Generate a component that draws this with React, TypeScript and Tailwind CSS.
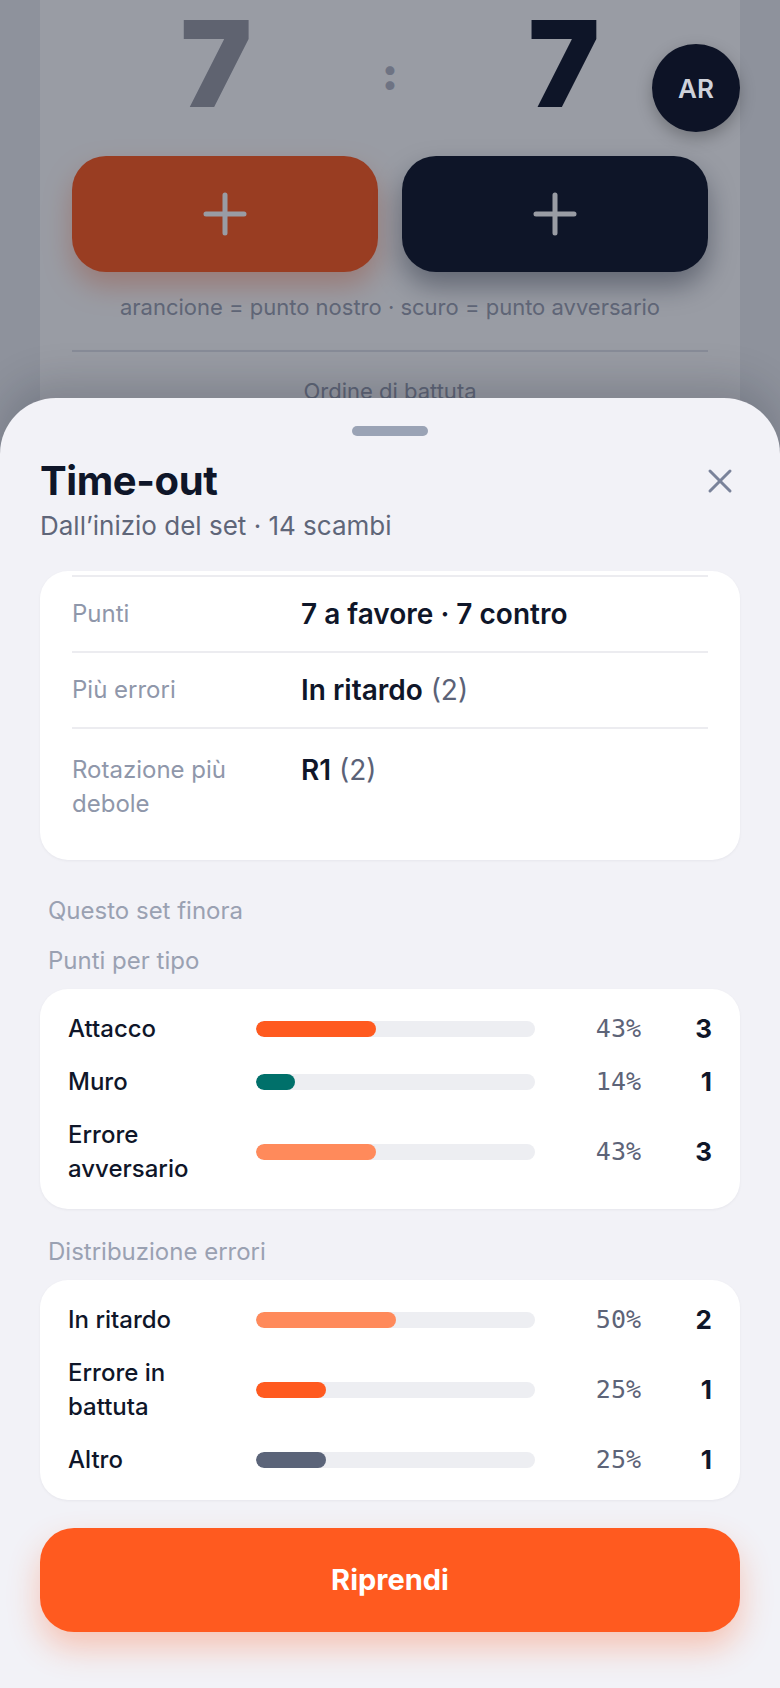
import React from 'react';
import { X } from 'lucide-react';

const summary = [
  { label: 'Punti', value: '7 a favore · 7 contro', extra: '' },
  { label: 'Più errori', value: 'In ritardo', extra: '(2)' },
  { label: 'Rotazione più debole', value: 'R1', extra: '(2)' },
];

const pointTypes = [
  { label: 'Attacco', pct: 43, count: 3, color: 'bg-[#ff5a1f]' },
  { label: 'Muro', pct: 14, count: 1, color: 'bg-[#00706a]' },
  { label: 'Errore avversario', pct: 43, count: 3, color: 'bg-[#ff8a5b]' },
];

const errorTypes = [
  { label: 'In ritardo', pct: 50, count: 2, color: 'bg-[#ff8a5b]' },
  { label: 'Errore in battuta', pct: 25, count: 1, color: 'bg-[#ff5a1f]' },
  { label: 'Altro', pct: 25, count: 1, color: 'bg-[#5b6479]' },
];

function PlusGlyph() {
  return (
    <svg width="44" height="44" viewBox="0 0 44 44" fill="none">
      <path d="M22 3v38M3 22h38" stroke="currentColor" strokeWidth="5" strokeLinecap="round" />
    </svg>
  );
}

function BarCard({ rows }: { rows: typeof pointTypes }) {
  return (
    <div className="rounded-[28px] bg-white px-7 pt-[23px] pb-[23px] flex flex-col gap-[19px] shadow-[0_1px_3px_rgba(15,22,41,0.05)]">
      {rows.map((r) => (
        <div key={r.label} className="grid grid-cols-[168px_1fr_86px_51px] gap-x-5 items-center">
          <span className="text-[24px] leading-[34px] font-medium text-[#0f1629]">{r.label}</span>
          <div className="h-4 rounded-full bg-[#edeef2] overflow-hidden">
            <div className={`h-full rounded-full ${r.color}`} style={{ width: `${r.pct}%` }} />
          </div>
          <span className="text-right text-[25px] leading-[34px] text-[#5d6478] font-['DejaVu_Sans_Mono',monospace]">
            {r.pct}%
          </span>
          <span className="text-right text-[26px] leading-[34px] font-bold text-[#0f1629]">{r.count}</span>
        </div>
      ))}
    </div>
  );
}

export default function App() {
  return (
    <div className="relative w-full h-[1688px] overflow-hidden bg-[#eceef1] font-['Inter',sans-serif]">
      {/* scoreboard behind the sheet */}
      <div className="mx-10 h-full bg-white px-8 pt-1 flex flex-col">
        <div className="flex justify-center items-center gap-[130px]">
          <span className="text-[120px] leading-none font-black text-[#9a9ca6]">7</span>
          <span className="text-[44px] leading-none font-black text-[#b4b8c6] mt-[20px]">:</span>
          <span className="text-[120px] leading-none font-black text-[#0f1629]">7</span>
        </div>
        <div className="mt-8 grid grid-cols-2 gap-6 h-[116px]">
          <button className="rounded-[34px] bg-[#ff5a1f] text-white flex items-center justify-center shadow-[0_14px_28px_rgba(255,90,31,0.35)]">
            <PlusGlyph />
          </button>
          <button className="rounded-[34px] bg-[#0f1629] text-white flex items-center justify-center shadow-[0_14px_28px_rgba(15,22,41,0.4)]">
            <PlusGlyph />
          </button>
        </div>
        <p className="mt-5 text-center text-[22px] leading-[30px] text-[#9aa0b0]">
          arancione = punto nostro · scuro = punto avversario
        </p>
        <div className="mt-7 h-[2px] bg-[#e2e4ea]" />
        <p className="mt-6 text-center text-[22px] leading-[30px] text-[#9aa0b0]">Ordine di battuta</p>
      </div>

      <div className="absolute inset-0 bg-[#0f1629]/[0.425]" />

      <div className="absolute left-[652px] top-[44px] w-[88px] h-[88px] rounded-full bg-[#0d1326] flex items-center justify-center text-[26px] font-semibold text-[#cfd2da] shadow-[0_6px_16px_rgba(0,0,0,0.25)]">
        AR
      </div>

      {/* time-out sheet */}
      <div className="absolute left-0 right-0 top-[398px] bottom-0 rounded-t-[56px] bg-[#f2f2f7] px-10 shadow-[0_-16px_40px_rgba(15,22,41,0.18)]">
        <div className="mx-auto mt-[28px] w-[76px] h-[10px] rounded-full bg-[#9aa3b5]" />

        <div className="mt-[21px] flex items-start justify-between">
          <div>
            <h2 className="text-[40px] leading-[48px] font-bold tracking-[-0.01em] text-[#0f1629]">Time-out</h2>
            <p className="mt-[5px] text-[26px] leading-[32px] text-[#5f6679]">Dall’inizio del set · 14 scambi</p>
          </div>
          <div className="h-[48px] flex items-center">
            <X size={40} strokeWidth={1.8} className="text-[#7a839a]" />
          </div>
        </div>

        <div className="mt-[29px] rounded-[28px] bg-white px-8 pt-1 overflow-hidden shadow-[0_1px_3px_rgba(15,22,41,0.05)]">
          <div className="h-[2px] bg-[#ececf0]" />
          {summary.map((s, i) => (
            <div
              key={s.label}
              className={
                i < summary.length - 1
                  ? 'flex items-start gap-6 py-5 border-b-2 border-[#ececf0]'
                  : 'flex items-start gap-6 pt-6 pb-[39px]'
              }
            >
              <span className="w-[205px] shrink-0 text-[24px] leading-[34px] text-[#8f97aa]">{s.label}</span>
              <span className="text-[28px] leading-[34px] font-semibold text-[#0f1629]">
                {s.value}
                {s.extra && <span className="font-normal text-[#5b6277]"> {s.extra}</span>}
              </span>
            </div>
          ))}
        </div>

        <p className="mt-[34px] pl-2 text-[24px] leading-[34px] text-[#9aa1b2]">Questo set finora</p>
        <p className="mt-4 pl-2 text-[24px] leading-[34px] text-[#9aa1b2]">Punti per tipo</p>
        <div className="mt-[11px]">
          <BarCard rows={pointTypes} />
        </div>

        <p className="mt-[26px] pl-2 text-[24px] leading-[34px] text-[#9aa1b2]">Distribuzione errori</p>
        <div className="mt-[11px]">
          <BarCard rows={errorTypes} />
        </div>

        <button className="mt-[28px] w-full h-[104px] rounded-[34px] bg-[#ff5a1f] text-white text-[29px] font-bold shadow-[0_16px_32px_rgba(255,90,31,0.3)]">
          Riprendi
        </button>
      </div>
    </div>
  );
}
